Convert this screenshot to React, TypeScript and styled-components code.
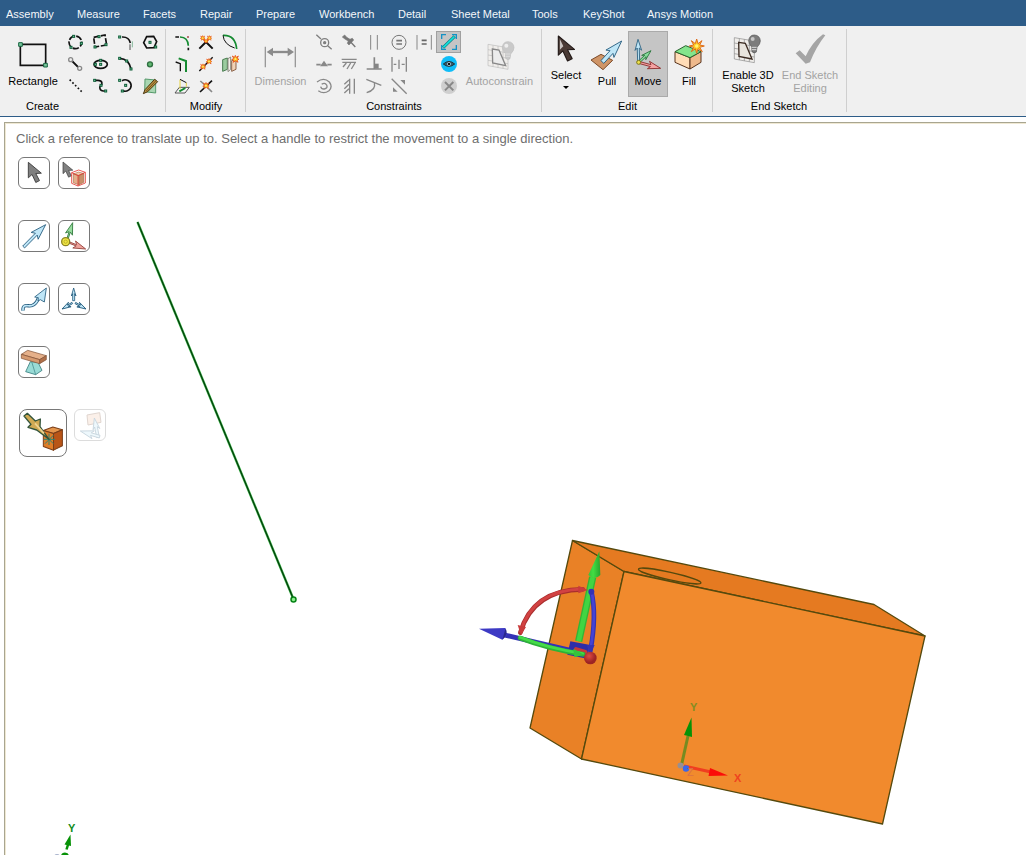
import React from "react";
import styled, { createGlobalStyle } from "styled-components";

const GlobalStyle = createGlobalStyle`
  *, *::before, *::after { box-sizing: border-box; }
  body {
    margin: 0;
    background: #ffffff;
    color: #000000;
    font-family: "Liberation Sans", Arial, sans-serif;
    font-size: 11px;
    line-height: 13px;
  }
  button { font: inherit; color: inherit; }
  svg { display: block; }
`;

const Page = styled.div`
  display: flex;
  flex-direction: column;
  min-height: 100vh;
  overflow: hidden;
`;

const TabBar = styled.nav`
  display: grid;
  grid-template-columns: 71px 66px 57px 56px 63px 79px 53px 81px 51px 64px auto;
  align-items: center;
  height: 26px;
  padding: 2px 6px 0;
  background: #2d5c88;
`;

const Tab = styled.a`
  color: #f4f7fa;
  text-decoration: none;
  white-space: nowrap;
`;

const Ribbon = styled.div`
  display: flex;
  background: #f0f0f0;
  border-bottom: 1px solid #2d5c88;
`;

const Group = styled.section<{ $end?: number }>`
  display: flex;
  flex-direction: column;
  padding: 5px ${(p) => p.$end ?? 3}px 1px 4px;
`;

const GroupBody = styled.div<{ $gap?: number }>`
  display: flex;
  gap: ${(p) => p.$gap ?? 0}px;
  height: 66px;
`;

const GroupTitle = styled.h2<{ $left?: boolean }>`
  margin: 0;
  padding-left: ${(p) => (p.$left ? 22 : 0)}px;
  font-size: 11px;
  font-weight: 400;
  line-height: 18px;
  text-align: ${(p) => (p.$left ? "left" : "center")};
`;

const Separator = styled.div`
  width: 1px;
  margin: 3px 0 4px;
  background: #cfcfcf;
`;

const LargeButton = styled.button<{ $width: number; $active?: boolean; $compact?: boolean }>`
  display: flex;
  flex-direction: column;
  align-items: center;
  width: ${(p) => p.$width}px;
  padding: 0;
  border: 0;
  background: ${(p) => (p.$active ? "#c5c5c5" : "transparent")};
  box-shadow: ${(p) => (p.$active ? "inset 0 0 0 1px #aaaaaa" : "none")};
  white-space: nowrap;
  &:disabled { color: #a3a3a3; }
  > svg {
    flex: none;
    width: 40px;
    height: ${(p) => (p.$compact ? 38 : 44)}px;
  }
`;

const DropArrow = styled.span`
  width: 0;
  margin-top: 4px;
  border: 3px solid transparent;
  border-top-color: #000000;
  border-bottom: 0;
`;

const IconGrid = styled.div<{ $cols: number; $cell: number }>`
  display: grid;
  grid-template-columns: repeat(${(p) => p.$cols}, ${(p) => p.$cell}px);
  grid-auto-rows: 22px;
`;

const IconButton = styled.button<{ $col?: number; $active?: boolean }>`
  display: grid;
  place-items: center;
  padding: 0;
  border: 0;
  grid-column: ${(p) => p.$col ?? "auto"};
  background: ${(p) => (p.$active ? "#c5c5c5" : "transparent")};
  box-shadow: ${(p) => (p.$active ? "inset 0 0 0 1px #a0a0a0" : "none")};
  > svg { width: 20px; height: 20px; }
`;

const Viewport = styled.main`
  position: relative;
  flex: 1;
  margin: 5px 0 0 4px;
  padding: 7px 10px 0;
  border-top: 1px solid #a8a590;
  border-left: 1px solid #a8a590;
  box-shadow: inset 1px 1px 0 #efe8d2;
  overflow: hidden;
`;

const Hint = styled.p`
  position: relative;
  margin: 0;
  padding-left: 1px;
  color: #6e6e6e;
  font-size: 13px;
  line-height: 18px;
`;

const Scene = styled.svg`
  position: absolute;
  inset: 0;
  width: 100%;
  height: 100%;
`;

const ToolGuides = styled.div`
  position: relative;
  display: flex;
  flex-direction: column;
  gap: 31px;
  padding: 9px 3px 0;
`;

const GuideRow = styled.div`
  display: flex;
  align-items: flex-start;
  gap: 8px;
`;

const GuideButton = styled.button<{ $large?: boolean }>`
  width: ${(p) => (p.$large ? 48 : 32)}px;
  height: ${(p) => (p.$large ? 48 : 32)}px;
  padding: 0;
  border: 1px solid #787878;
  border-radius: ${(p) => (p.$large ? 8 : 6)}px;
  background: #ffffff;
  &:disabled { opacity: 0.25; }
  > svg { width: 100%; height: 100%; }
`;

const LargeRow = styled(GuideRow)`
  gap: 7px;
  padding-left: 1px;
`;

const Node = ({ x, y }: { x: number; y: number }) => (
  <rect x={x - 3} y={y - 3} width="6" height="6" fill="#8fd8b0" stroke="#0c5c37" strokeWidth="3" />
);

const Small = ({ children }: { children: React.ReactNode }) => (
  <svg viewBox="0 0 60 60" fill="none" stroke="#111" strokeWidth="5">
    {children}
  </svg>
);

const Spark = ({ x, y, r = 10 }: { x: number; y: number; r?: number }) => (
  <g transform={`translate(${x} ${y}) scale(${r / 10})`}>
    <path
      d="M0-12 3-5 10-10 6-2 12 1 6 4 9 11 1 6-7 11-5 4-12 2-5-2-10-10-3-5Z"
      fill="#ffd21e"
      stroke="#e8521c"
      strokeWidth="3"
    />
    <circle r="2.5" fill="#fff59a" stroke="none" />
  </g>
);

type IconDef = { name: string; art: React.ReactNode; col?: number; active?: boolean };

const createIcons: IconDef[] = [
  {
    name: "Circle",
    art: (
      <>
        <circle cx="31" cy="31" r="19" strokeDasharray="19 5" strokeDashoffset="6" />
        <Node x={26} y={13} /><Node x={49} y={34} /><Node x={18} y={46} />
      </>
    ),
  },
  {
    name: "Three-point rectangle",
    art: (
      <>
        <path d="M11 16 45 9 50 39 15 45Z" strokeDasharray="17 5" />
        <Node x={27} y={14} /><Node x={15} y={45} /><Node x={48} y={38} />
      </>
    ),
  },
  {
    name: "Tangent arc",
    art: (
      <>
        <path d="M21 15Q42 14 46 33" />
        <path d="M45 37V54" stroke="#8c8c8c" />
        <path d="M52 28V46" stroke="#85b99b" strokeWidth="3" />
        <Node x={14} y={15} />
      </>
    ),
  },
  {
    name: "Polygon",
    art: (
      <>
        <path d="M20 14 41 13 50 29 42 47 20 48 11 32Z" />
        <Node x={30} y={31} /><Node x={47} y={45} />
      </>
    ),
  },
  {
    name: "Tangent line",
    art: (
      <>
        <path d="M20 20 41 41" strokeWidth="6" />
        <circle cx="17" cy="17" r="6" stroke="#888" strokeWidth="4" fill="#f0f0f0" />
        <circle cx="44" cy="43" r="6" stroke="#888" strokeWidth="4" fill="#f0f0f0" />
      </>
    ),
  },
  {
    name: "Ellipse",
    art: (
      <>
        <ellipse cx="32" cy="31" rx="20" ry="12" />
        <Node x={32} y={19} /><Node x={32} y={31} /><Node x={16} y={31} />
      </>
    ),
  },
  {
    name: "Three-point arc",
    art: (
      <>
        <path d="M14 13Q42 15 48 45" />
        <Node x={14} y={13} /><Node x={35} y={21} /><Node x={48} y={45} />
      </>
    ),
  },
  {
    name: "Point",
    art: <circle cx="30" cy="31" r="7.5" fill="#62b872" stroke="#2f7041" strokeWidth="4" />,
  },
  {
    name: "Construction line",
    art: <path d="M14 11 52 49" strokeDasharray="5 6.5" />,
  },
  {
    name: "Spline",
    art: (
      <>
        <path d="M14 13H24C38 13 38 25 32 29C27 33 29 45 40 45H47" />
        <Node x={14} y={13} /><Node x={33} y={28} /><Node x={47} y={45} />
      </>
    ),
  },
  {
    name: "Sweep arc",
    art: (
      <>
        <path d="M21 14A18 17 0 1 1 23 44" />
        <Node x={14} y={13} /><Node x={32} y={28} /><Node x={22} y={45} />
      </>
    ),
  },
  {
    name: "Face curve",
    art: (
      <>
        <path d="M15 9 47 12V51L14 47Z" fill="#a9d6b2" stroke="#569a6b" strokeWidth="3" />
        <path d="M15 41 44 10 53 17 23 47 10 53Z" fill="#b89143" stroke="#4a3510" strokeWidth="3" />
        <path d="M19 45 47 15" stroke="#76551a" strokeWidth="3" />
      </>
    ),
  },
];

const modifyIcons: IconDef[] = [
  {
    name: "Create rounded corner",
    art: (
      <>
        <path d="M10 15H21M49 47V55" />
        <path d="M24 15Q48 16 49 41" stroke="#158b31" />
        <circle cx="48" cy="15" r="3" fill="#a64c4c" stroke="none" />
      </>
    ),
  },
  {
    name: "Trim away",
    art: (
      <>
        <path d="M10 50 30 30 50 50" strokeWidth="6" />
        <path d="M17 16 30 30 43 16" stroke="#d5531f" />
        <Spark x={20} y={18} r={6} /><Spark x={40} y={18} r={6} /><Spark x={30} y={27} r={5} />
      </>
    ),
  },
  {
    name: "Bend",
    art: (
      <>
        <path d="M9 10Q46 8 50 51" stroke="#158b31" />
        <path d="M9 10Q12 38 44 48" strokeWidth="3" />
      </>
    ),
  },
  {
    name: "Offset curve",
    art: (
      <>
        <path d="M20 13 42 21V54" stroke="#158b31" strokeWidth="6" />
        <path d="M11 24 25 29V52" strokeWidth="4" />
      </>
    ),
  },
  {
    name: "Split curve",
    art: (
      <>
        <path d="M10 51 50 10" strokeWidth="4" />
        <Spark x={21} y={38} r={7} /><Spark x={39} y={22} r={7} />
      </>
    ),
  },
  {
    name: "Mirror",
    art: (
      <>
        <path d="M8 17 22 12V46L8 52Z" fill="#9ccc9f" stroke="#467b4d" strokeWidth="3" />
        <path d="M35 20 48 16V46L35 52Z" fill="#f0d2b6" stroke="#8c6248" strokeWidth="3" />
        <path d="M24 14V53L32 46V9Z" fill="#f4f0ea" stroke="#8c8a80" strokeWidth="3" />
        <Spark x={46} y={15} r={9} />
      </>
    ),
  },
  {
    name: "Project to sketch",
    art: (
      <>
        <path d="M9 51 22 34H52L39 51Z" fill="#f5f5f5" stroke="#555" strokeWidth="3" />
        <path d="M24 39V11M43 32V20" stroke="#e6d440" strokeWidth="3" />
        <path d="M24 10 43 20" strokeWidth="3" />
        <path d="M22 46 40 36" stroke="#158b31" strokeWidth="6" />
      </>
    ),
  },
  {
    name: "Create corner",
    art: (
      <>
        <path d="M12 48 48 14" />
        <path d="M13 15 30 30" stroke="#888" /><path d="M34 34 48 48" stroke="#888" />
        <Spark x={30} y={29} r={8} />
      </>
    ),
  },
];

const constraintIcons: IconDef[] = [
  {
    name: "Coincident",
    art: (
      <g stroke="#7f7f7f" strokeWidth="4">
        <circle cx="32" cy="32" r="12" /><circle cx="32" cy="32" r="3" fill="#7f7f7f" />
        <path d="M7 8 21 21M41 41 53 52" />
      </g>
    ),
  },
  {
    name: "Fixed",
    art: (
      <>
        <path d="M10 15 17 9 23 16 33 22 40 19 44 24 30 39 25 34 28 27 19 22Z" fill="#777" stroke="#777" strokeWidth="2" />
        <path d="M35 30 49 45" stroke="#777" strokeWidth="4" />
      </>
    ),
  },
  { name: "Parallel", art: <path d="M20 9V53M40 9V53" stroke="#858585" strokeWidth="3" /> },
  {
    name: "Equal radius",
    art: <g stroke="#777" strokeWidth="3"><circle cx="30" cy="31" r="21" /><path d="M22 26H39M22 36H39" strokeWidth="5" /></g>,
  },
  {
    name: "Equal distance",
    art: <g stroke="#888" strokeWidth="3"><path d="M9 9V53M52 9V53" /><path d="M23 25H38M23 36H38" stroke="#666" strokeWidth="5" /></g>,
  },
  {
    name: "Show constraints",
    active: true,
    art: (
      <g>
        <path d="M8 21V8H21M39 8H52V21M52 39V52H39M21 52H8V39" stroke="#1592c5" strokeWidth="4" />
        <path d="M12 47 47 13" stroke="#137d83" strokeWidth="9" /><path d="M13 46 46 14" stroke="#13e2dc" strokeWidth="5" />
      </g>
    ),
  },
  { name: "Midpoint", art: <><path d="M7 32H20M40 32H53" stroke="#888" /><path d="M18 37 30 20 42 37Z" fill="#888" stroke="none" /></> },
  { name: "Horizontal", art: <path d="M8 16H53M10 25H51M12 39 22 27M24 45 35 27M37 45 48 27" stroke="#888" strokeWidth="4" /> },
  { name: "Perpendicular", art: <><path d="M8 45H53M31 10V45" stroke="#858585" strokeWidth="5" /><path d="M32 29H44V44H32Z" fill="#858585" stroke="none" /></> },
  { name: "Symmetric", art: <path d="M9 9V53M52 9V53M30 17V45M14 31H22M38 31H47" stroke="#888" strokeWidth="4" /> },
  {
    name: "Visibility",
    col: 6,
    art: (
      <>
        <circle cx="30" cy="30" r="24" fill="#0fbdf8" stroke="none" />
        <path d="M13 30Q30 15 47 30 30 44 13 30Z" fill="#315c70" stroke="#242f33" strokeWidth="3" />
        <circle cx="30" cy="30" r="5" fill="#111" stroke="#8aafbd" strokeWidth="3" />
      </>
    ),
  },
  { name: "Concentric", art: <path d="M9 18Q29 2 46 18 57 33 45 44 29 56 13 44M23 25Q32 18 38 27 42 37 31 39 22 40 20 32" stroke="#888" strokeWidth="4" /> },
  { name: "Vertical", art: <path d="M46 8V53M32 8V53M30 12 16 25M30 25 16 38M30 38 16 51" stroke="#888" strokeWidth="4" /> },
  { name: "Tangent", art: <path d="M7 10 52 28M31 20Q37 42 8 50" stroke="#888" strokeWidth="4" /> },
  { name: "Equal length", art: <><path d="M8 8 53 53" stroke="#888" strokeWidth="4" /><path d="M34 12H48V26ZM12 34V47H26Z" fill="#888" stroke="none" /></> },
  { name: "Delete constraints", col: 6, art: <><circle cx="30" cy="30" r="24" fill="#cfcfcf" stroke="none" /><path d="M18 18 43 43M43 18 18 43" stroke="#888" strokeWidth="6" /></> },
];

const Icons = ({ items, cols, cell }: { items: IconDef[]; cols: number; cell: number }) => (
  <IconGrid $cols={cols} $cell={cell}>
    {items.map((i) => (
      <IconButton key={i.name} type="button" aria-label={i.name} $col={i.col} $active={i.active}>
        <Small>{i.art}</Small>
      </IconButton>
    ))}
  </IconGrid>
);

const Big = ({ children, h = 132 }: { children: React.ReactNode; h?: number }) => (
  <svg viewBox={`0 0 120 ${h}`} fill="none" aria-hidden="true">
    {children}
  </svg>
);

const SheetAndBulb = ({ faded }: { faded?: boolean }) => (
  <g stroke={faded ? "#bbb" : "#8a8a8a"} transform={faded ? "translate(5 20)" : undefined}>
    <path d="M19 20 79 30V95L19 84Z" fill="#f0eeeb" strokeWidth="2" />
    <path d="M19 36 79 46M19 52 79 62M19 68 79 78M34 23V87M49 25V90M64 28V92" strokeWidth="2" />
    <path d="M32 34 52 37 72 84 33 76Z" fill={faded ? "#ececec" : "#e8e4dd"} stroke={faded ? "#888" : "#3b2b22"} strokeWidth="4" />
    <path d="M62 29Q64 12 79 12 96 13 97 30 97 39 87 49L85 63Q78 69 72 62L71 47Q62 39 62 29Z" fill={faded ? "#c9c9c9" : "#7c7c7c"} stroke={faded ? "#bcbcbc" : "#555"} strokeWidth="2" />
    <path d="M71 49H86M72 56H85" stroke="#ddd" strokeWidth="3" />
    <circle cx="74" cy="24" r="6" fill={faded ? "#eee" : "#c6c6c6"} stroke="none" />
  </g>
);

type ArrowProps = { from: [number, number]; to: [number, number]; w: number; head: number; fill: string; line: string };

const Arrow = ({ from, to, w, head, fill, line }: ArrowProps) => {
  const dx = to[0] - from[0];
  const dy = to[1] - from[1];
  const len = Math.hypot(dx, dy);
  const angle = (Math.atan2(dy, dx) * 180) / Math.PI;
  const neck = len - head;
  const wing = head * 0.34;
  return (
    <g transform={`translate(${from[0]} ${from[1]}) rotate(${angle})`}>
      <path
        d={`M0 ${-w}H${neck + 3}L${neck - 4} ${-wing}L${len} 0L${neck - 4} ${wing}L${neck + 3} ${w}H0Z`}
        fill={fill}
        stroke={line}
        strokeWidth="2.5"
        strokeLinejoin="round"
      />
    </g>
  );
};

const Cursor = ({ dark }: { dark?: boolean }) => (
  <path
    d="M0 0V50L12 39 24 65 36 59 24 36 42 35Z"
    fill={dark ? "#4a3a35" : "#808080"}
    stroke={dark ? "#241b19" : "#3d3d3d"}
    strokeWidth="3"
    strokeLinejoin="round"
  />
);

const SolidBox = ({ pale }: { pale?: boolean }) => (
  <g stroke={pale ? "#a0603c" : "#7a3e19"} strokeWidth="3" strokeLinejoin="round">
    <path d="M0 14 28 4 56 12 30 23Z" fill={pale ? "#f3cdae" : "#e5964d"} />
    <path d="M0 14 30 23V72L0 61Z" fill={pale ? "#e3b18c" : "#df7d27"} />
    <path d="M30 23 56 12V59L30 72Z" fill={pale ? "#c98f68" : "#b95517"} />
  </g>
);

const Guide = ({ name, children, large, disabled }: { name: string; children: React.ReactNode; large?: boolean; disabled?: boolean }) => (
  <GuideButton type="button" aria-label={name} $large={large} disabled={disabled}>
    <svg viewBox={large ? "0 0 138 138" : "0 0 90 90"} fill="none">{children}</svg>
  </GuideButton>
);

const blue = { fill: "#bfe6f7", line: "#245b7d" };

const Model = () => (
  <Scene viewBox="5 123 1021 732" preserveAspectRatio="xMinYMin slice" fill="none" aria-hidden="true">
    <defs>
      <linearGradient id="green" x1="0" x2="1">
        <stop stopColor="#36c13a" /><stop offset="0.4" stopColor="#42dd43" /><stop offset="1" stopColor="#29a42d" />
      </linearGradient>
      <radialGradient id="ball" cx="0.4" cy="0.35">
        <stop stopColor="#df4b43" /><stop offset="1" stopColor="#9d2424" />
      </radialGradient>
    </defs>
    <path d="M137.5 222 293 598" stroke="#37b545" strokeWidth="2.4" />
    <path d="M137.5 222 293 598" stroke="#033a0b" strokeWidth="1.2" />
    <circle cx="293.5" cy="599.5" r="2.5" fill="#8cf08c" stroke="#078317" strokeWidth="1.5" />

    <g stroke="#55490d" strokeWidth="1.3" strokeLinejoin="round">
      <path d="M572.5 540.5 624 571.5 581.5 759 530 728Z" fill="#e98126" />
      <path d="M572.5 540.5 874 604.5 925 636 624 571.5Z" fill="#e57a21" />
      <path d="M624 571.5 925 636 882.5 824 581.5 759Z" fill="#f18a2d" />
      <ellipse cx="669.7" cy="576" rx="32" ry="3.8" transform="rotate(12.5 669.7 576)" />
    </g>

    <g transform="translate(470 530) scale(0.33333)" strokeLinecap="round">
      <path d="M108 316 340 370" stroke="#3432b5" strokeWidth="15" />
      <path d="M27 296 106 294 111 315 97 329Z" fill="#3d3ac4" />
      <path d="M107 295Q116 314 97 329" fill="#29288c" />
      <path d="M301 334 357 344 352 386 292 374Z" fill="#2e2da9" />
      <path d="M326 334 368 142" stroke="#32b536" strokeWidth="22" strokeLinecap="butt" />
      <path d="M326 334 368 142" stroke="#42d542" strokeWidth="14" strokeLinecap="butt" />
      <path d="M388 64 391 135Q374 153 355 135Z" fill="url(#green)" />
      <path d="M151 308Q188 180 338 178" stroke="#a92e2e" strokeWidth="14" />
      <path d="M152 304Q189 180 338 177" stroke="#d24242" strokeWidth="9" />
      <path d="M143 285 168 291 153 316ZM325 167 354 180 325 190Z" fill="#c93b3b" />
      <path d="M364 184Q381 256 361 363" stroke="#3432b5" strokeWidth="14" />
      <path d="M365 186Q380 256 361 358" stroke="#4643d4" strokeWidth="8" />
      <circle cx="364" cy="185" r="9" fill="#3432b5" />
      <path d="M350 346 374 345 361 372Z" fill="#3432b5" />
      <path d="M318 358 346 366" stroke="#c63939" strokeWidth="13" />
      <path d="M150 324Q232 356 340 373" stroke="#2eb238" strokeWidth="14" />
      <path d="M150 322Q232 354 338 371" stroke="#44db49" strokeWidth="8" />
      <path d="M310 356 342 374 313 382Z" fill="#36c33c" />
      <circle cx="361" cy="384" r="19" fill="url(#ball)" />
    </g>

    <path d="M681.5 765 688 736" stroke="#768b20" strokeWidth="3" />
    <path d="M691.5 717.5 692 737 684 735Z" fill="#079207" />
    <path d="M684 766 711 772" stroke="#f03d20" strokeWidth="3" />
    <path d="M728 775.5 708.5 776 710 768Z" fill="#fb0d09" />
    <circle cx="680.5" cy="765.5" r="3" fill="#998f91" />
    <circle cx="686" cy="768.5" r="3.2" fill="#3b66ea" />
    <g fontFamily="Liberation Sans, Arial, sans-serif" fontSize="11" fontWeight="700">
      <text x="690" y="711" fill="#848d22">Y</text>
      <text x="734" y="782" fill="#ef431f">X</text>
      <text x="687" y="776" fill="#dc7244" fontWeight="400">Z</text>
      <text x="68" y="832" fill="#118c22">Y</text>
    </g>
    <path d="M66.5 849.5 68.5 843" stroke="#079207" strokeWidth="2.5" />
    <path d="M70.5 834.5 71 846 64.5 844.5Z" fill="#079207" />
    <circle cx="65" cy="856.5" r="4" fill="#079207" />
    <circle cx="57" cy="857" r="3" fill="#a8b2cb" />
  </Scene>
);

const tabs = ["Assembly", "Measure", "Facets", "Repair", "Prepare", "Workbench", "Detail", "Sheet Metal", "Tools", "KeyShot", "Ansys Motion"];

export default function App() {
  return (
    <Page>
      <GlobalStyle />
      <TabBar>
        {tabs.map((t) => <Tab key={t} href="#">{t}</Tab>)}
      </TabBar>
      <Ribbon>
        <Group>
          <GroupBody>
            <LargeButton type="button" $width={58}>
              <Big>
                <path d="M22 40H98V103H22Z" stroke="#111" strokeWidth="5" />
                <path d="M17 35H28V46H17ZM92 97H103V108H92Z" fill="#79c59c" stroke="#176541" strokeWidth="3" />
              </Big>
              Rectangle
            </LargeButton>
            <Icons items={createIcons} cols={4} cell={25} />
          </GroupBody>
          <GroupTitle $left>Create</GroupTitle>
        </Group>
        <Separator />
        <Group>
          <GroupBody><Icons items={modifyIcons} cols={3} cell={24} /></GroupBody>
          <GroupTitle>Modify</GroupTitle>
        </Group>
        <Separator />
        <Group>
          <GroupBody>
            <LargeButton type="button" disabled $width={61}>
              <Big>
                <path d="M13 47V109M103 47V109" stroke="#999" strokeWidth="4" />
                <path d="M28 63H88" stroke="#8b8b8b" strokeWidth="7" />
                <path d="M17 63 36 50V76ZM99 63 80 50V76Z" fill="#8b8b8b" />
              </Big>
              Dimension
            </LargeButton>
            <Icons items={constraintIcons} cols={6} cell={25} />
            <LargeButton type="button" disabled $width={77}>
              <Big><SheetAndBulb faded /></Big>
              Autoconstrain
            </LargeButton>
          </GroupBody>
          <GroupTitle>Constraints</GroupTitle>
        </Group>
        <Separator />
        <Group>
          <GroupBody $gap={1}>
            <LargeButton type="button" $width={40} $compact>
              <Big h={114}>
                <g transform="translate(37 15) scale(1.15)"><Cursor dark /><path d="M4 8V36L13 27Z" fill="#c9c3c1" /></g>
              </Big>
              Select
              <DropArrow />
            </LargeButton>
            <LargeButton type="button" $width={40}>
              <Big>
                <path d="M12 87 42 70 77 88 48 116Z" fill="#cf9567" stroke="#7c4b2a" strokeWidth="3" />
                <Arrow from={[46, 93]} to={[104, 30]} w={6} head={48} {...blue} />
              </Big>
              Pull
            </LargeButton>
            <LargeButton type="button" $width={40} $active aria-pressed="true">
              <Big>
                <Arrow from={[32, 94]} to={[69, 59]} w={3} head={26} fill="#89dc9c" line="#28753a" />
                <Arrow from={[32, 94]} to={[98, 112]} w={3} head={34} fill="#f4a2a2" line="#8d2d2d" />
                <Arrow from={[32, 94]} to={[30, 25]} w={3} head={29} {...blue} />
                <circle cx="32" cy="94" r="6" fill="#eee04c" stroke="#7c7419" strokeWidth="3" />
              </Big>
              Move
            </LargeButton>
            <LargeButton type="button" $width={40}>
              <Big>
                <g stroke="#59331c" strokeWidth="3" strokeLinejoin="round">
                  <path d="M18 62 63 80V114L18 94Z" fill="#ffdcb7" />
                  <path d="M63 80 96 62V94L63 114Z" fill="#efb98c" />
                  <path d="M18 62 50 44 96 62 63 80Z" fill="#83e58c" stroke="#27612d" />
                </g>
                <path d="M83 24 87 38 99 29 92 42 106 45 92 49 100 62 87 53 83 67 79 53 67 62 74 49 61 45 74 42 67 29 79 38Z" fill="#ffca23" stroke="#df6b1b" strokeWidth="3" />
                <circle cx="83" cy="45" r="5" fill="#fff474" />
              </Big>
              Fill
            </LargeButton>
          </GroupBody>
          <GroupTitle>Edit</GroupTitle>
        </Group>
        <Separator />
        <Group $end={5}>
          <GroupBody>
            <LargeButton type="button" $width={62} $compact>
              <Big h={114}><SheetAndBulb /></Big>
              <span>Enable 3D<br />Sketch</span>
            </LargeButton>
            <LargeButton type="button" disabled $width={62} $compact>
              <Big h={114}><path d="M17 67 29 58 47 76Q66 34 99 10L106 13Q78 48 60 94L47 98Z" fill="#a5a5a5" /></Big>
              <span>End Sketch<br />Editing</span>
            </LargeButton>
          </GroupBody>
          <GroupTitle>End Sketch</GroupTitle>
        </Group>
        <Separator />
      </Ribbon>
      <Viewport>
        <Model />
        <Hint>Click a reference to translate up to. Select a handle to restrict the movement to a single direction.</Hint>
        <ToolGuides>
          <GuideRow>
            <Guide name="Select"><g transform="translate(28 13) scale(0.93)"><Cursor /></g></Guide>
            <Guide name="Select component">
              <g transform="translate(12 12) scale(0.7)"><Cursor /></g>
              <g transform="translate(43 40) scale(0.56)"><SolidBox pale /></g>
              <path d="M38 44 59 36 79 43V75L57 84 38 76ZM38 44 57 53 79 43M57 53V84" stroke="#e33b32" strokeWidth="2.5" />
            </Guide>
          </GuideRow>
          <GuideRow>
            <Guide name="Move direction"><Arrow from={[14, 78]} to={[80, 11]} w={4} head={43} {...blue} /></Guide>
            <Guide name="Anchor">
              <Arrow from={[24, 58]} to={[41, 5]} w={2} head={32} fill="#97dc9e" line="#367e43" />
              <Arrow from={[24, 62]} to={[80, 84]} w={2} head={33} fill="#efa29b" line="#984641" />
              <circle cx="20" cy="62" r="12" fill="#efe544" stroke="#8c8425" strokeWidth="4" />
              <circle cx="20" cy="62" r="5" stroke="#a99e23" strokeWidth="2" />
            </Guide>
          </GuideRow>
          <GuideRow>
            <Guide name="Move along trajectory">
              <path d="M12 80C10 53 34 73 44 62Q53 58 58 43" stroke={blue.line} strokeWidth="10" />
              <path d="M12 80C10 53 34 73 44 62Q53 58 58 43" stroke={blue.fill} strokeWidth="5" />
              <path d="M82 12 76 54 64 47 57 51 58 41 47 39Z" fill={blue.fill} stroke={blue.line} strokeWidth="2.5" />
            </Guide>
            <Guide name="Orient to object">
              <Arrow from={[44, 50]} to={[44, 12]} w={3} head={20} {...blue} />
              <Arrow from={[40, 57]} to={[9, 75]} w={2} head={23} {...blue} />
              <Arrow from={[49, 57]} to={[81, 75]} w={2} head={23} {...blue} />
            </Guide>
          </GuideRow>
          <GuideRow>
            <Guide name="Fulcrum">
              <path d="M34 44 20 74 50 83 69 70 57 46Z" fill="#99dbd6" stroke="#387e80" strokeWidth="2.5" />
              <path d="M38 44 50 83" stroke="#387e80" strokeWidth="2" />
              <path d="M7 22 26 10 82 26 62 38Z" fill="#e5b08a" stroke="#7c4c31" strokeWidth="2" />
              <path d="M7 22 62 38V50L7 34Z" fill="#d69a70" stroke="#7c4c31" strokeWidth="2" />
              <path d="M62 38 82 26V38L62 50Z" fill="#b0704a" stroke="#7c4c31" strokeWidth="2" />
            </Guide>
          </GuideRow>
          <LargeRow>
            <Guide name="Up to" large>
              <g transform="translate(70 47) scale(1.02)"><SolidBox /></g>
              <path d="M87 71V105M71 88H105M75 76 100 101M100 76 75 101" stroke="#2f8576" strokeWidth="3" />
              <path d="M12 18 22 10 46 33 61 27 60 50 87 88 50 60 24 52 33 43Z" fill="#cfa953" stroke="#31533b" strokeWidth="4" strokeLinejoin="round" />
              <path d="M45 40 72 70" stroke="#eed391" strokeWidth="5" />
            </Guide>
            <Guide name="Maintain orientation" disabled>
              <path d="M36 15 74 8 78 37 39 45Z" fill="#f1c6aa" stroke="#865c44" strokeWidth="3" />
              <Arrow from={[69, 82]} to={[58, 24]} w={4} head={30} {...blue} />
              <Arrow from={[74, 80]} to={[16, 63]} w={4} head={36} {...blue} />
            </Guide>
          </LargeRow>
        </ToolGuides>
      </Viewport>
    </Page>
  );
}
